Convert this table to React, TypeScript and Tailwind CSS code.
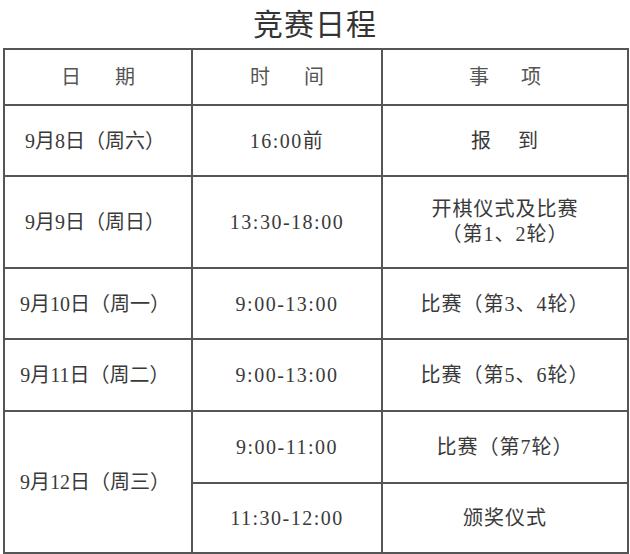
import React from "react";

const cjk = '"Liberation Serif", "Noto Sans CJK SC", serif';

type Row = {
  date?: string;
  dateSpan?: number;
  time: string;
  item: React.ReactNode;
  h: string;
};

const rows: Row[] = [
  { date: "9月8日（周六）", time: "16:00前", item: <Spaced a="报" b="到" gap="gap-[26px]" />, h: "h-[71px]" },
  {
    date: "9月9日（周日）",
    time: "13:30-18:00",
    item: (
      <div className="leading-[25px]">
        <div>开棋仪式及比赛</div>
        <div>（第1、2轮）</div>
      </div>
    ),
    h: "h-[92px]",
  },
  { date: "9月10日（周一）", time: "9:00-13:00", item: "比赛（第3、4轮）", h: "h-[71px]" },
  { date: "9月11日（周二）", time: "9:00-13:00", item: "比赛（第5、6轮）", h: "h-[72px]" },
  { date: "9月12日（周三）", dateSpan: 2, time: "9:00-11:00", item: "比赛（第7轮）", h: "h-[72px]" },
  { time: "11:30-12:00", item: "颁奖仪式", h: "h-[70px]" },
];

function Spaced({ a, b, gap }: { a: string; b: string; gap: string }) {
  return (
    <div className={`flex justify-center ${gap}`}>
      <span>{a}</span>
      <span>{b}</span>
    </div>
  );
}

export default function App() {
  return (
    <div className="w-[630px] h-[554px] bg-white overflow-hidden" style={{ fontFamily: cjk }}>
      <h1 className="h-[48px] flex items-center justify-center text-[30px] tracking-[1px] text-[#333] pt-[1px]">
        竞赛日程
      </h1>
      <table className="ml-[3px] w-[626px] table-fixed text-[20px] text-[#3a3a3a]">
        <colgroup>
          <col className="w-[188px]" />
          <col className="w-[190px]" />
          <col />
        </colgroup>
        <thead>
          <tr className="h-[56px] text-[#555]">
            <th className="border-2 border-[#555] font-normal">
              <Spaced a="日" b="期" gap="gap-[34px]" />
            </th>
            <th className="border-2 border-[#555] font-normal">
              <Spaced a="时" b="间" gap="gap-[34px]" />
            </th>
            <th className="border-2 border-[#555] font-normal">
              <Spaced a="事" b="项" gap="gap-[32px]" />
            </th>
          </tr>
        </thead>
        <tbody>
          {rows.map((r, i) => (
            <tr key={i} className={r.h}>
              {r.date && (
                <td rowSpan={r.dateSpan} className="border-2 border-[#555] text-center pr-[6px]">
                  {r.date}
                </td>
              )}
              <td className="border-2 border-[#555] text-center tracking-[1.5px]">{r.time}</td>
              <td className="border-2 border-[#555] text-center tracking-[1px]">{r.item}</td>
            </tr>
          ))}
        </tbody>
      </table>
    </div>
  );
}
